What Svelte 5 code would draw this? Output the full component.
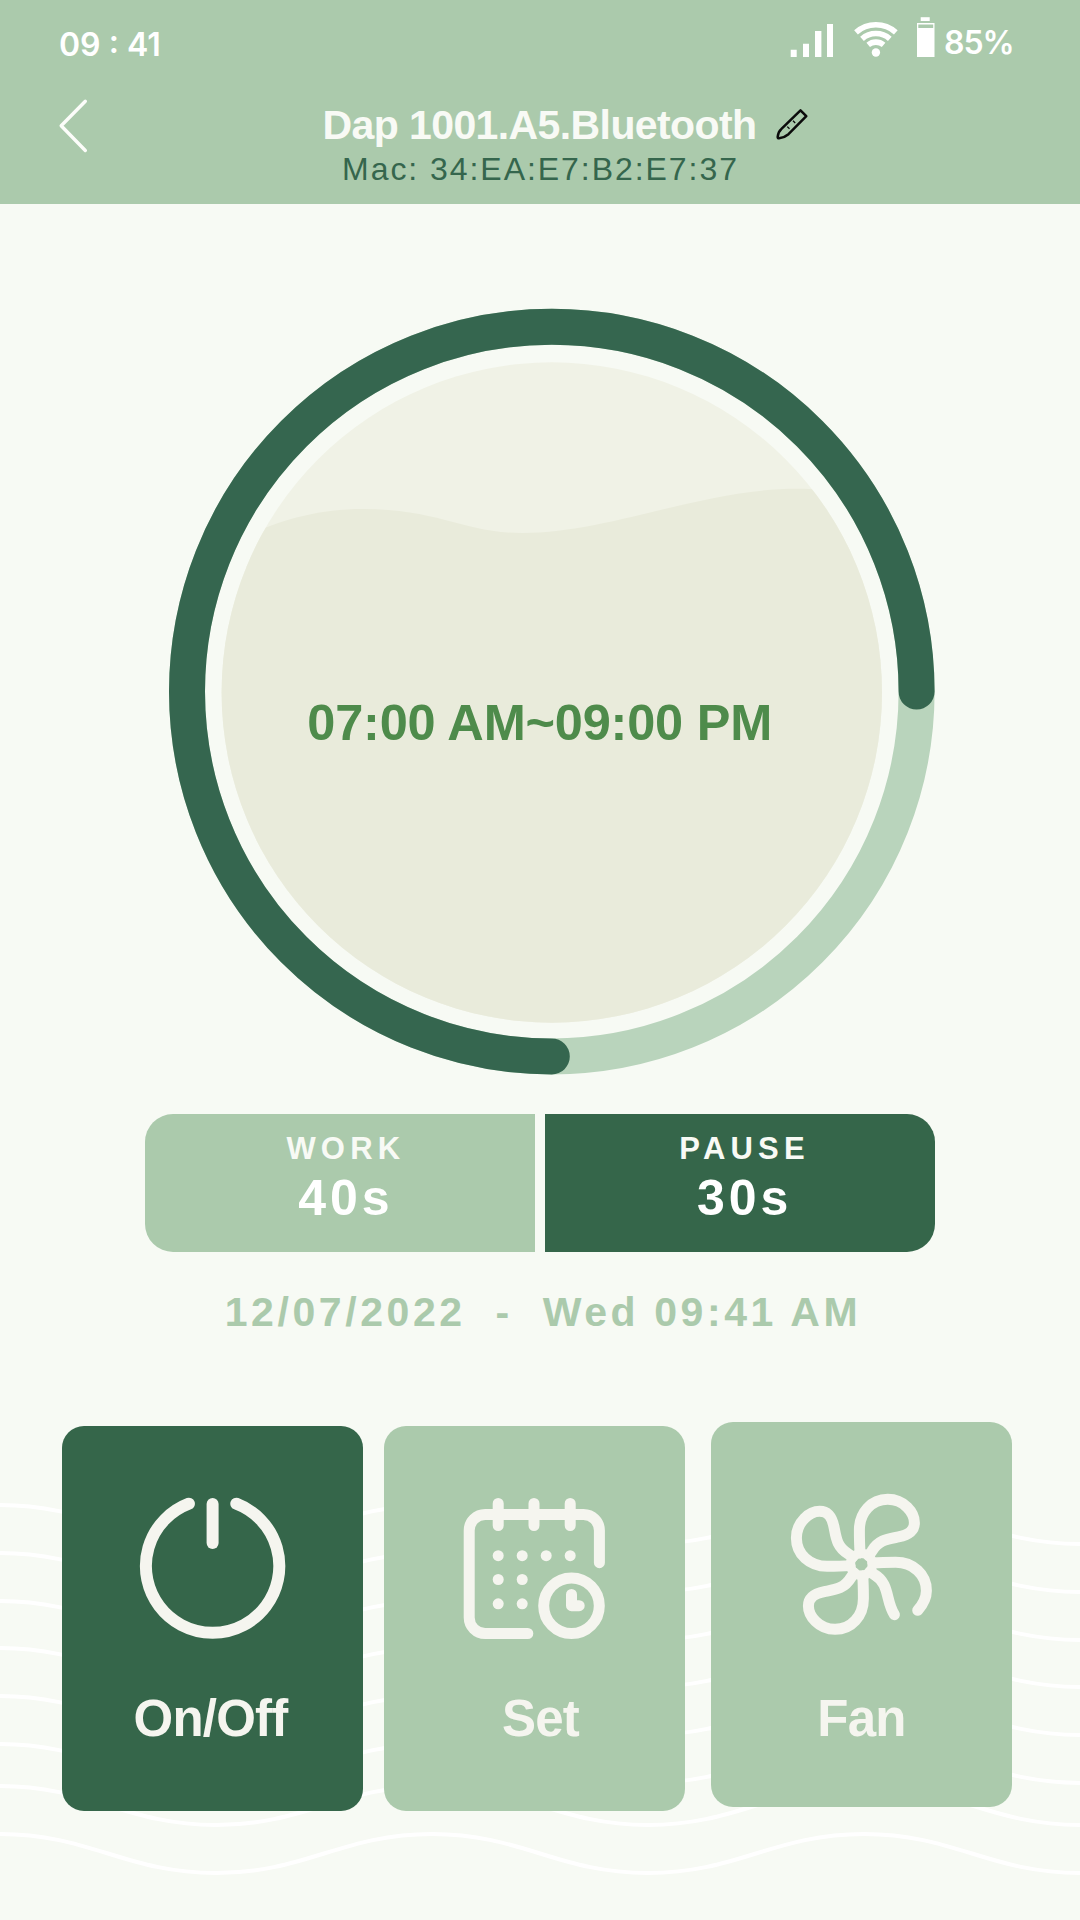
<script>
    const status = { time: "09 : 41", battery: "85%" };

    const device = {
        name: "Dap 1001.A5.Bluetooth",
        mac: "34:EA:E7:B2:E7:37",
    };

    const schedule = "07:00 AM~09:00 PM";
    const dateText = "12/07/2022  -  Wed 09:41 AM";

    const phases = [
        { id: "work", label: "WORK", value: "40s" },
        { id: "pause", label: "PAUSE", value: "30s" },
    ];

    const actions = [
        { id: "power", label: "On/Off" },
        { id: "set", label: "Set" },
        { id: "fan", label: "Fan" },
    ];

    let powered = $state(true);

    const dots = [
        [43.8, 65.7],
        [67.8, 65.7],
        [91.8, 65.7],
        [115.8, 65.7],
        [43.8, 89.5],
        [67.8, 89.5],
        [43.8, 113.8],
        [67.8, 113.8],
    ];

    // crest height of every background wave
    const waves = [11, 59, 107, 154, 202, 250, 292, 340];

    function wavePath(y) {
        let d = `M-432 ${y}`;
        for (let i = 0; i < 4; i++) {
            d += " c90 0 126 39 216 39 s126 -39 216 -39";
        }
        return d;
    }

    function press(id) {
        if (id === "power") powered = !powered;
    }
</script>

<div class="screen">
    <svg class="waves" viewBox="0 0 1080 426" aria-hidden="true">
        {#each waves as y}
            <path d={wavePath(y)} />
        {/each}
    </svg>

    <header>
        <div class="status">
            <span class="time">{status.time}</span>
            <svg class="signals" width="146" height="44" viewBox="0 0 146 44">
                <path d="M0.7 27.7h6v7.3h-6zM13 21.7h6v13.3h-6zM25 9h6.4v26h-6.4zM37 2h6v33h-6z" />
                <g class="wifi">
                    <path d="M66 10.3a30 30 0 0 1 39.8 0" />
                    <path d="M72 16.8a21 21 0 0 1 27.8 0" />
                    <path d="M78.2 22.9a12.2 12.2 0 0 1 15.4 0" />
                </g>
                <circle cx="85.9" cy="30.5" r="4.2" />
                <path d="M130.7 -4.8h9v3.8h-9z" />
                <path
                    fill-rule="evenodd"
                    d="M127 1h17.5v34h-17.5zM128.3 2.4v3.6h14.9v-3.6z"
                />
            </svg>
            <span class="battery">{status.battery}</span>
        </div>

        <div class="nav">
            <button class="back" aria-label="Back">
                <svg width="30" height="54" viewBox="0 0 30 54">
                    <path d="M25.3 3.2 L1.2 27.8 L25.3 52.5" />
                </svg>
            </button>
            <h1>{device.name}</h1>
            <button class="edit" aria-label="Rename">
                <svg width="34" height="34" viewBox="0 0 34 34">
                    <path d="M24.5 2.3 L30.3 8.2 L12.5 26.2 Q8.5 29.6 3 30.3 Q1.5 30.3 1.7 28.6 Q2.4 23.5 5.2 21.2 Z" />
                    <path class="tick" d="M17 12.8l2.2 2.2M11.3 18.6l2.2 2.2" />
                </svg>
            </button>
            <p class="mac">Mac: {device.mac}</p>
        </div>
    </header>

    <main>
        <svg class="gauge" width="766" height="766" viewBox="0 0 766 766">
            <defs>
                <clipPath id="tank">
                    <circle cx="382.8" cy="383.5" r="330.2" />
                </clipPath>
            </defs>
            <circle class="track" cx="382.8" cy="382.6" r="364.8" />
            <path class="progress" d="M382.8 747.4 A364.8 364.8 0 1 1 747.6 382.6" />
            <circle class="empty" cx="382.8" cy="383.5" r="330.2" />
            <path
                class="liquid"
                clip-path="url(#tank)"
                d="M40 245 C85 222 130 200 194 200 C272 200.5 295 224 353 224 C445 224 540 176 640 180 L766 190 V766 H0 Z"
            />
            <text x="370.7" y="431" text-anchor="middle">{schedule}</text>
        </svg>

        <div class="phases">
            {#each phases as phase}
                <div class="phase {phase.id}">
                    <span class="phase-label">{phase.label}</span>
                    <span class="phase-value">{phase.value}</span>
                </div>
            {/each}
        </div>

        <p class="date">{dateText}</p>

        <div class="actions">
            {#each actions as action}
                <button
                    class="card {action.id}"
                    class:active={action.id === "power" && powered}
                    onclick={() => press(action.id)}
                >
                    <svg width="160" height="160" viewBox="0.6 0 160 160">
                        {#if action.id === "power"}
                            <g class="thick">
                                <path d="M56.5 13.7 A66.7 66.7 0 1 0 103.9 13.7" />
                                <path d="M80.2 13.9 V53" />
                            </g>
                        {:else if action.id === "set"}
                            <path d="M145 72.7 V40.5 A16 16 0 0 0 129 24.5 H30.8 A16 16 0 0 0 14.8 40.5 V127.5 A16 16 0 0 0 30.8 143.5 H73.4" />
                            <path d="M43.8 13.5v22M79.6 13.5v22M115.8 13.5v22" />
                            {#each dots as [cx, cy]}
                                <circle class="dot" {cx} {cy} r="5.5" />
                            {/each}
                            <circle cx="117.1" cy="115.7" r="27.8" />
                            <path d="M117.1 104.5 V115.7 H124.8" />
                        {:else}
                            <g class="blades" transform="translate(80 78.3) scale(0.3333)">
                                {#each [0, -90, 180] as angle}
                                    <path
                                        transform="rotate({angle})"
                                        d="M-4 -34 Q-6 -62 -6 -103 C-6 -155 30 -195 79 -195 C128 -195 159 -155 159 -125 C159 -98 140 -88 111 -82 C80 -76 52 -74 31 -39 L22 -26"
                                    />
                                {/each}
                                <path d="M34 -4 Q62 -6 103 -6 C155 -6 195 30 195 79 Q195 108 169 138" />
                                <path d="M26 22 L39 31 C86 58 72 111 99 151" />
                                <circle r="33" />
                            </g>
                        {/if}
                    </svg>
                    <span>{action.label}</span>
                </button>
            {/each}
        </div>
    </main>
</div>

<style>
    :global(body) {
        background: #f7faf4;
    }

    .screen {
        position: relative;
        width: 1080px;
        height: 1920px;
        overflow: hidden;
        background: #f7faf4;
        font-family: "Liberation Sans", Arial, sans-serif;
    }

    h1,
    p {
        margin: 0;
    }

    svg {
        display: block;
        overflow: visible;
    }

    button {
        padding: 0;
        border: none;
        background: none;
        font: inherit;
        color: inherit;
        cursor: pointer;
    }

    .waves {
        position: absolute;
        left: 0;
        bottom: 0;
        width: 1080px;
        height: 426px;
    }

    .waves path {
        fill: none;
        stroke: #ffffff;
        stroke-width: 4;
    }

    header {
        height: 204px;
        box-sizing: border-box;
        padding: 22px 60px 0 59px;
        background: #abcaac;
    }

    .status {
        display: flex;
        align-items: center;
        height: 44px;
        color: #ffffff;
        font-family: Inter, "Liberation Sans", sans-serif;
        font-weight: 600;
        font-size: 32px;
        line-height: 40px;
    }

    .time {
        margin: 2px auto 0 0;
        letter-spacing: 0;
    }

    .signals {
        fill: #ffffff;
    }

    .wifi {
        fill: none;
        stroke: #ffffff;
        stroke-width: 5.6;
    }

    .battery {
        width: 76px;
        margin-left: 8px;
        margin-bottom: 2px;
        letter-spacing: -1px;
    }

    .nav {
        display: grid;
        grid-template-columns: 1fr auto 1fr;
        grid-template-rows: 44px 44px;
        margin-top: 37px;
    }

    .back {
        justify-self: start;
        align-self: start;
        margin: -5px 0 0 1px;
    }

    .back path {
        fill: none;
        stroke: #fcfdfa;
        stroke-width: 3.4;
        stroke-linecap: round;
        stroke-linejoin: round;
    }

    h1 {
        color: #f8faf5;
        font-size: 41px;
        line-height: 44px;
        letter-spacing: -0.6px;
    }

    .edit {
        justify-self: start;
        align-self: start;
        margin: 5px 0 0 20px;
    }

    .edit path {
        fill: none;
        stroke: #0b0b0b;
        stroke-width: 2.5;
        stroke-linejoin: round;
    }

    .edit .tick {
        stroke-width: 1.3;
    }

    .mac {
        grid-column: 1 / -1;
        padding-left: 2px;
        text-align: center;
        color: #35664d;
        font-size: 32px;
        line-height: 44px;
        letter-spacing: 1.95px;
    }

    main {
        position: relative;
        padding-top: 105px;
    }

    .gauge {
        margin-left: 169px;
    }

    .track,
    .progress {
        fill: none;
        stroke-width: 36;
        stroke-linecap: round;
    }

    .track {
        stroke: #b9d4bc;
    }

    .progress {
        stroke: #35664f;
    }

    .empty {
        fill: #f0f2e6;
    }

    .liquid {
        fill: #e9ebdb;
    }

    .gauge text {
        fill: #4e8b4b;
        font-size: 50.5px;
        font-weight: bold;
        letter-spacing: -0.2px;
    }

    .phases {
        display: grid;
        grid-template-columns: 1fr 1fr;
        gap: 10.5px;
        margin: 39px 145px 0;
    }

    .phase {
        display: flex;
        flex-direction: column;
        align-items: center;
        height: 138px;
        box-sizing: border-box;
        padding-top: 19px;
        color: #ffffff;
        font-weight: bold;
    }

    .work {
        padding-left: 12px;
        background: #abcaac;
        border-radius: 28px 0 0 28px;
    }

    .pause {
        padding-left: 9px;
        background: #35664a;
        border-radius: 0 28px 28px 0;
    }

    .phase-label {
        color: #f8faf5;
        font-size: 31px;
        line-height: 32px;
        letter-spacing: 5.2px;
    }

    .phase-value {
        font-size: 50px;
        line-height: 67px;
        letter-spacing: 4px;
    }

    .date {
        margin-top: 36px;
        padding-left: 6px;
        text-align: center;
        white-space: pre;
        color: #abcaac;
        font-size: 41px;
        font-weight: bold;
        line-height: 48px;
        letter-spacing: 3.57px;
    }

    .actions {
        display: flex;
        align-items: flex-start;
        margin: 86.4px 0 0 62px;
    }

    .card {
        display: flex;
        flex-direction: column;
        align-items: center;
        width: 301px;
        height: 385px;
        margin: 4px 21px 0 0;
        padding-top: 64px;
        box-sizing: border-box;
        border-radius: 22px;
        background: #abcaac;
        color: #f5f5ef;
        font-size: 51px;
        font-weight: bold;
        line-height: 60px;
        letter-spacing: -0.8px;
    }

    .card.fan {
        margin: 0 0 0 5px;
    }

    .card.active {
        background: #35664a;
    }

    .card span {
        margin-top: 39px;
    }

    .card.power span {
        margin-right: 4px;
    }

    .card.set span {
        margin-left: 12px;
    }

    .card.fan span {
        margin-top: 43px;
    }

    .card svg {
        fill: none;
        stroke: #f5f5ef;
        stroke-width: 11;
        stroke-linecap: round;
        stroke-linejoin: round;
    }

    .card .thick {
        stroke-width: 12;
    }

    .card .dot {
        fill: #f5f5ef;
        stroke: none;
    }

    .card .blades {
        stroke-width: 33;
    }

    .blades circle {
        stroke-width: 28;
    }
</style>
